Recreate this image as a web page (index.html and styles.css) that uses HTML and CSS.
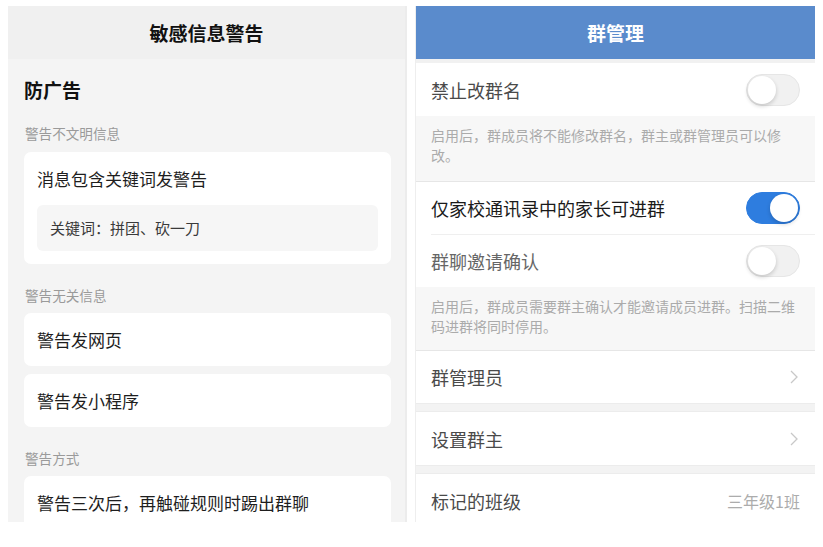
FILE: index.html
```html
<!DOCTYPE html>
<html lang="zh-CN">
<head>
<meta charset="utf-8">
<title>群管理</title>
<link rel="stylesheet" href="styles.css">
</head>
<body>
<div class="page">
  <section class="panel left">
    <header class="lhead">敏感信息警告</header>
    <div class="lbody">
      <h2 class="ltitle">防广告</h2>
      <div class="label first">警告不文明信息</div>
      <div class="card big">
        <div class="ctitle">消息包含关键词发警告</div>
        <div class="kw">关键词：拼团、砍一刀</div>
      </div>
      <div class="label">警告无关信息</div>
      <div class="card">警告发网页</div>
      <div class="card">警告发小程序</div>
      <div class="label">警告方式</div>
      <div class="card">警告三次后，再触碰规则时踢出群聊</div>
    </div>
  </section>
  <section class="panel right">
    <header class="rhead">群管理</header>
    <div class="strip top"></div>
    <div class="row">
      <span class="rtext">禁止改群名</span>
      <span class="toggle"><span class="knob"></span></span>
    </div>
    <div class="desc">启用后，群成员将不能修改群名，群主或群管理员可以修改。</div>
    <div class="row bt">
      <span class="rtext dark">仅家校通讯录中的家长可进群</span>
      <span class="toggle on"><span class="knob"></span></span>
    </div>
    <div class="row indent">
      <span class="rtext light">群聊邀请确认</span>
      <span class="toggle"><span class="knob"></span></span>
    </div>
    <div class="desc second">启用后，群成员需要群主确认才能邀请成员进群。扫描二维码进群将同时停用。</div>
    <div class="row bt">
      <span class="rtext">群管理员</span>
      <svg class="chev" viewBox="0 0 8 14" width="8" height="14"><path d="M1 1 L7 7 L1 13" fill="none" stroke="#c8c8c8" stroke-width="1.3"/></svg>
    </div>
    <div class="strip"></div>
    <div class="row">
      <span class="rtext">设置群主</span>
      <svg class="chev" viewBox="0 0 8 14" width="8" height="14"><path d="M1 1 L7 7 L1 13" fill="none" stroke="#c8c8c8" stroke-width="1.3"/></svg>
    </div>
    <div class="strip"></div>
    <div class="row">
      <span class="rtext">标记的班级</span>
      <span class="value">三年级1班</span>
    </div>
  </section>
</div>
</body>
</html>
```
FILE: styles.css
```css
* { box-sizing: border-box; margin: 0; padding: 0; }
html, body { background: #ffffff; }
body {
  font-family: "Noto Sans CJK SC", "Noto Sans", sans-serif;
  width: 823px;
  height: 547px;
  overflow: hidden;
}
.page {
  display: flex;
  gap: 8px;
  padding: 6px 0 0 8px;
}
.panel {
  height: 516px;
  overflow: hidden;
}
.left {
  width: 399px;
  background: #f4f4f4;
  border-right: 2px solid #ececec;
}
.lhead {
  height: 53px;
  background: #f0f0f0;
  text-align: center;
  line-height: 53px;
  font-size: 19px;
  font-weight: 700;
  color: #111;
}
.lbody {
  padding: 18px 14px 0 16px;
}
.ltitle {
  font-size: 19px;
  font-weight: 600;
  line-height: 26px;
  color: #111;
}
.label {
  font-size: 13.6px;
  line-height: 20px;
  color: #9a9a9a;
  margin: 21px 0 8px 1px;
}
.label.first { margin-top: 20px; margin-bottom: 9px; }
.card {
  background: #fff;
  border-radius: 7px;
  height: 53px;
  line-height: 53px;
  padding: 0 13px;
  font-size: 17px;
  color: #1e1e1e;
  margin-bottom: 8px;
}
.card.big {
  height: auto;
  line-height: normal;
  padding: 15px 13px 13px;
}
.ctitle {
  font-size: 17px;
  line-height: 24px;
  color: #1e1e1e;
  margin-bottom: 14px;
}
.kw {
  background: #f6f6f6;
  border-radius: 6px;
  height: 46px;
  line-height: 46px;
  padding: 0 13px;
  font-size: 15px;
  color: #3a3a3a;
}
.right {
  width: 400px;
  background: #fff;
  border-left: 1px solid #eeeeee;
}
.rhead {
  height: 53px;
  background: #5a8bcc;
  color: #fff;
  text-align: center;
  line-height: 53px;
  font-size: 19px;
  font-weight: 700;
}
.strip {
  height: 9px;
  background: #f3f3f3;
  border-top: 1px solid #ececec;
  border-bottom: 1px solid #ececec;
}
.strip.top { height: 4px; border: 0; background: #f1f1f1; }
.row {
  height: 53px;
  display: flex;
  align-items: center;
  justify-content: space-between;
  padding: 0 15px 0 15px;
  background: #fff;
}
.row.bt { border-top: 1px solid #e6e6e6; }
.row.indent {
  border-top: 1px solid #efefef;
  margin-left: 15px;
  padding-left: 0;
}
.rtext {
  font-size: 18px;
  color: #4a4a4a;
}
.rtext.dark { color: #1a1a1a; }
.rtext.light { color: #666; }
.value {
  font-size: 16px;
  color: #acacac;
}
.chev { margin-right: 2px; }
.desc {
  background: #f7f7f7;
  padding: 9px 15px 14px;
  font-size: 14px;
  line-height: 20px;
  color: #ababab;
  min-height: 65px;
}
.desc.second { min-height: 63px; padding-top: 9px; }
.toggle {
  position: relative;
  width: 54px;
  height: 32px;
  border-radius: 16px;
  background: #f1f1f1;
  border: 1px solid #e6e6e6;
  flex: none;
}
.toggle .knob {
  position: absolute;
  top: 1px;
  left: 1px;
  width: 28px;
  height: 28px;
  border-radius: 50%;
  background: #fff;
  box-shadow: 0 2px 4px rgba(0,0,0,0.18);
}
.toggle.on {
  background: #2e7ddf;
  border-color: #2e7ddf;
}
.toggle.on .knob { left: 23px; }
```
